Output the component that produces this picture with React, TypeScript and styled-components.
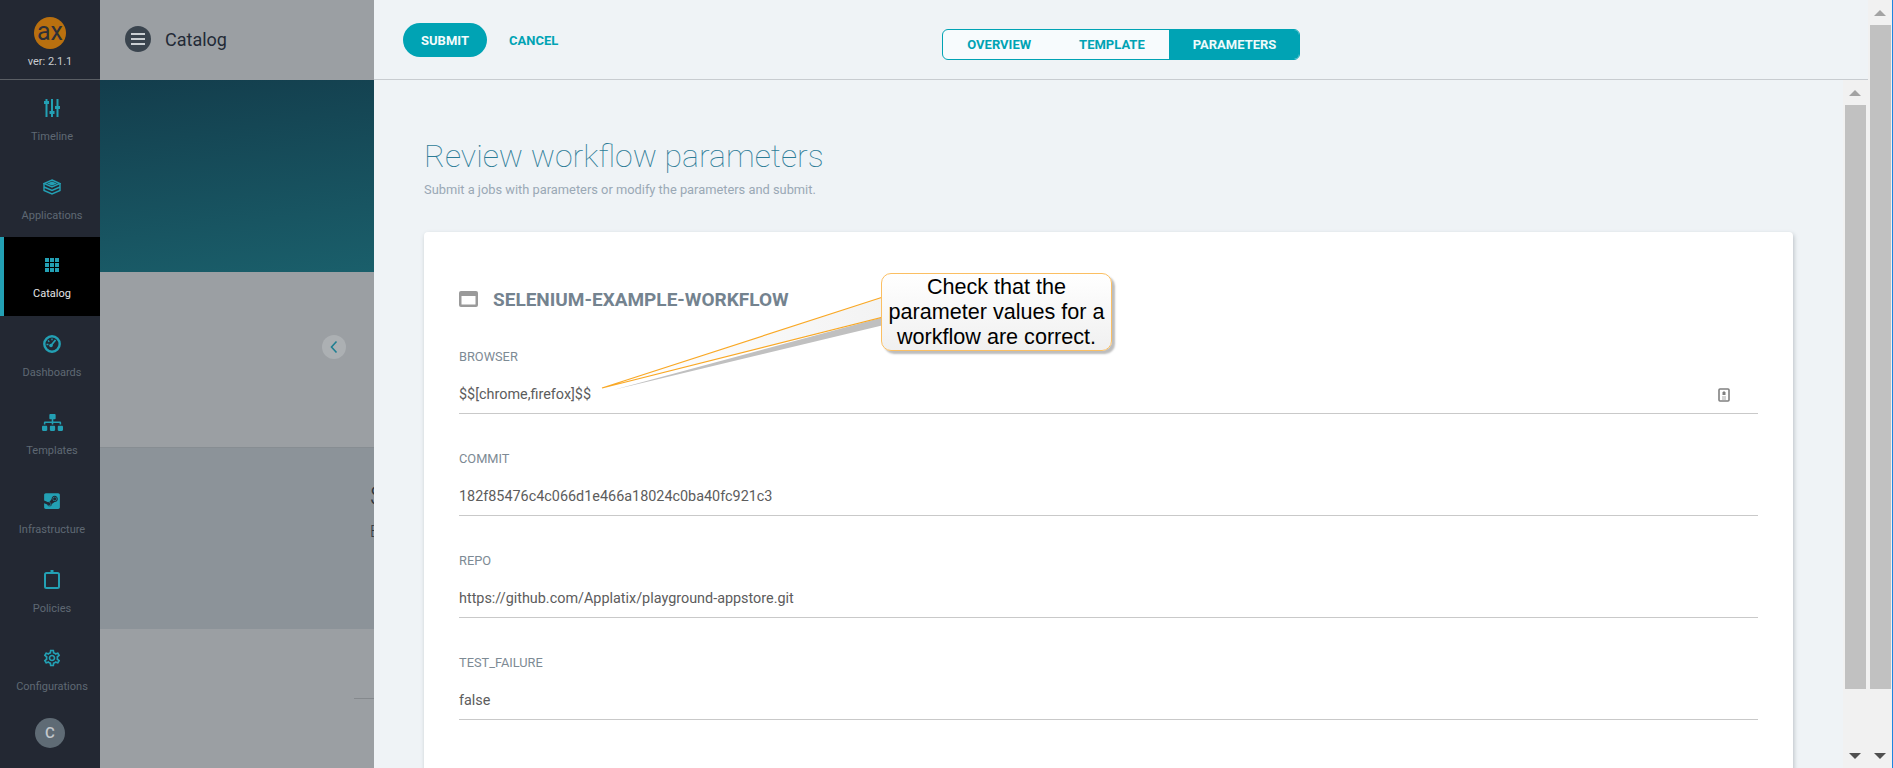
import React from "react";
import styled, { createGlobalStyle } from "styled-components";
import { FaSitemap, FaSteamSquare } from "react-icons/fa";
import { MdOutlineSettings } from "react-icons/md";

const GlobalStyle = createGlobalStyle`
    html, body {
        margin: 0;
        height: 100%;
        overflow: hidden;
    }
    #root {
        height: 100%;
    }
    * {
        box-sizing: border-box;
    }
`;

const Page = styled.div`
    position: relative;
    display: flex;
    width: 1893px;
    height: 768px;
    overflow: hidden;
    font-family: Roboto, "Liberation Sans", sans-serif;
    background: #9b9fa3;
`;

/* 왼쪽 사이드바 */
const Sidebar = styled.nav`
    display: flex;
    flex-direction: column;
    flex: 0 0 100px;
    background: #232833;
`;

const Brand = styled.div`
    display: flex;
    flex-direction: column;
    align-items: center;
    height: 80px;
    padding-top: 17px;
    border-bottom: 1px solid #5a5e64;

    span {
        margin-top: 6px;
        font-size: 11px;
        line-height: 13px;
        color: #c9ccd0;
    }
`;

const NavItem = styled.a<{ $active?: boolean }>`
    display: flex;
    flex-direction: column;
    align-items: center;
    height: 78.6px;
    padding-top: 17px;
    font-size: 11px;
    color: ${(p) => (p.$active ? "#e4e6e8" : "#5f6873")};
    background: ${(p) => (p.$active ? "#000" : "transparent")};
    border-left: 4px solid ${(p) => (p.$active ? "#23a0b4" : "transparent")};

    .icon {
        display: flex;
        align-items: center;
        justify-content: center;
        width: 24px;
        height: 22px;
        color: #23a0b4;
    }

    .label {
        margin-top: 11px;
        line-height: 14px;
    }
`;

const Avatar = styled.div`
    display: flex;
    align-items: center;
    justify-content: center;
    width: 30px;
    height: 30px;
    margin: 9px auto 0;
    border-radius: 50%;
    background: #5f6b75;
    color: #c3c8cc;
    font-size: 15px;
    font-weight: 500;
`;

/* 패널 뒤쪽의 어두워진 페이지 */
const Backdrop = styled.div`
    display: flex;
    flex-direction: column;
    flex: 0 0 274px;
    overflow: hidden;
`;

const BackdropHeader = styled.header`
    display: flex;
    align-items: center;
    gap: 14px;
    height: 80px;
    padding: 0 0 2px 25px;
    font-size: 18px;
    color: #232a36;
`;

const MenuButton = styled.div`
    display: flex;
    flex-direction: column;
    align-items: center;
    justify-content: center;
    gap: 3px;
    width: 26px;
    height: 26px;
    border-radius: 50%;
    background: #3a444e;

    i {
        width: 14px;
        height: 2px;
        background: #c9ced2;
    }
`;

const Hero = styled.div`
    height: 192px;
    background: linear-gradient(172deg, #133d4c 0%, #1a5f6b 100%);
`;

const Gap = styled.div`
    display: flex;
    justify-content: flex-end;
    height: 175px;
    padding: 63px 28px 0 0;
`;

const RoundBack = styled.div`
    display: flex;
    align-items: center;
    justify-content: center;
    width: 24px;
    height: 24px;
    border-radius: 50%;
    background: #acb0b3;
`;

const Band = styled.div`
    height: 182px;
    padding: 33px 0 0 270px;
    background: #8c9399;
    color: #2f3740;
    border-top: 1px solid #878d92;
    white-space: nowrap;

    h3 {
        margin: 0;
        font-size: 26px;
        font-weight: 300;
        line-height: 30px;
    }

    p {
        margin: 12px 0 0;
        font-size: 16px;
        font-weight: 300;
        line-height: 18px;
    }
`;

const BackdropLine = styled.div`
    align-self: flex-end;
    width: 20px;
    height: 1px;
    margin-top: 69px;
    background: #85898d;
`;

/* 슬라이드 패널 */
const Panel = styled.main`
    display: flex;
    flex-direction: column;
    flex: 0 0 1494px;
    background: #eff3f6;
`;

const TopBar = styled.div`
    display: flex;
    align-items: flex-start;
    flex: 0 0 80px;
    padding: 23px 0 0 29px;
    border-bottom: 1px solid #c8ccd0;
`;

const SubmitButton = styled.button`
    width: 84px;
    height: 34px;
    border: 0;
    border-radius: 17px;
    background: #00a3b4;
    color: #f4fbfc;
    font: 700 13px Roboto, sans-serif;
`;

const CancelButton = styled.button`
    height: 34px;
    margin-left: 22px;
    padding: 0;
    border: 0;
    background: none;
    color: #00a3b4;
    font: 700 13px Roboto, sans-serif;
`;

const Tabs = styled.div`
    display: flex;
    height: 31px;
    margin: 6px 0 0 384px;
    border: 1px solid #00a3b4;
    border-radius: 6px;
    background: #f7fbfd;
    overflow: hidden;
`;

const Tab = styled.div<{ $active?: boolean }>`
    display: flex;
    align-items: center;
    padding: 0 ${(p) => (p.$active ? "23px" : "24px")} 0 24px;
    font-size: 13px;
    font-weight: 700;
    color: ${(p) => (p.$active ? "#eefafb" : "#00a3b4")};
    background: ${(p) => (p.$active ? "#00a3b4" : "transparent")};
`;

const PanelBody = styled.div`
    display: flex;
    flex: 1;
    min-height: 0;
`;

const Content = styled.section`
    flex: 1;
    min-width: 0;
    padding: 57px 50px 0;
    overflow: hidden;
`;

const Title = styled.h1`
    margin: 0;
    font-size: 32px;
    font-weight: 100;
    line-height: 38px;
    color: #2d7c97;
`;

const Subtitle = styled.p`
    margin: 7px 0 0;
    font-size: 12.85px;
    line-height: 16px;
    color: #9aa8b5;
`;

const Card = styled.div`
    width: 1369px;
    height: 620px;
    margin-top: 34px;
    padding: 56px 35px 0;
    border-radius: 4px;
    background: #fff;
    box-shadow: 1px 2px 4px rgba(90, 100, 110, 0.35);
`;

const CardTitle = styled.h2`
    display: flex;
    align-items: center;
    gap: 15px;
    height: 22px;
    margin: 0;
    font-size: 19px;
    font-weight: 700;
    color: #74838f;
`;

const Field = styled.div`
    height: 102px;
    padding-top: 15px;
    &:first-of-type {
        padding-top: 0;
        height: 87px;
        margin-top: 40px;
    }
`;

const FieldLabel = styled.label`
    display: block;
    font-size: 12.8px;
    line-height: 14px;
    color: #7d8a94;
`;

const FieldValue = styled.div`
    display: flex;
    align-items: center;
    justify-content: space-between;
    height: 36px;
    margin-top: 14px;
    padding-right: 28px;
    padding-bottom: 2px;
    font-size: 14.4px;
    color: #5c5c5c;
    border-bottom: 1px solid #c9c9c9;
`;

/* 스크롤바 */
const ScrollTrack = styled.div`
    display: flex;
    flex-direction: column;
    align-items: center;
    flex: 0 0 25px;
    padding-right: 1px;
    background: #f1f1f1;
`;

const ScrollThumb = styled.div<{ $size: number }>`
    flex: 0 0 ${(p) => p.$size}px;
    width: 21px;
    background: #c1c1c1;
`;

const ArrowBox = styled.div`
    display: flex;
    align-items: center;
    justify-content: center;
    flex: 0 0 25px;
    width: 100%;
`;

const Arrow = styled.i<{ $down?: boolean }>`
    width: 0;
    height: 0;
    border-left: 6px solid transparent;
    border-right: 6px solid transparent;
    ${(p) =>
        p.$down
            ? "border-top: 6px solid #505050; margin-top: 1px;"
            : "border-bottom: 6px solid #a3a3a3;"}
`;

const TrackFill = styled.div`
    flex: 1;
`;

const OuterBar = styled(ScrollTrack)`
    padding-right: 0;
    border-right: 1px solid #1c86e0;
`;

/* 말풍선 주석 */
const CalloutTail = styled.svg`
    position: absolute;
    left: 598px;
    top: 290px;
`;

const CalloutBox = styled.div`
    position: absolute;
    left: 881px;
    top: 273px;
    width: 231px;
    height: 78px;
    border: 1px solid #fbbf63;
    border-radius: 10px;
    background: linear-gradient(#ffffff, #f0f0f0);
    box-shadow: 3px 3px 2px #bdbdbd;
    font: 21.6px/25px "Liberation Sans", Arial, sans-serif;
    color: #000;
    text-align: center;
    white-space: nowrap;
`;

const TimelineIcon = () => (
    <svg width="16" height="18" viewBox="0 0 16 18" fill="currentColor">
        <rect x="1.500" y="0" width="2" height="18" />
        <rect x="7" y="0" width="2" height="18" />
        <rect x="12.500" y="0" width="2" height="18" />
        <rect x="0" y="2" width="5" height="3" />
        <rect x="5.500" y="12" width="5" height="3" />
        <rect x="11" y="7" width="5" height="3" />
    </svg>
);

const LayersIcon = () => (
    <svg width="18" height="16" viewBox="0 0 18 16" fill="none" stroke="currentColor" strokeWidth="1.400">
        <path d="M9 1 17 4.500 9 8 1 4.500Z" />
        <path d="M4 4.500 9 2.500 14 4.500 9 6.500Z" fill="currentColor" stroke="none" />
        <path d="M1 4.500V11.500L9 15 17 11.500V4.500" />
        <path d="M1 8 9 11.500 17 8" />
    </svg>
);

const GridIcon = () => (
    <svg width="14" height="14" viewBox="0 0 14 14" fill="currentColor">
        {[0, 5, 10].map((y) =>
            [0, 5, 10].map((x) => <rect key={`${x}-${y}`} x={x} y={y} width="4" height="4" />),
        )}
    </svg>
);

const GaugeIcon = () => (
    <svg width="18" height="18" viewBox="0 0 18 18" fill="none" stroke="currentColor">
        <circle cx="9" cy="9" r="7.700" strokeWidth="2.400" />
        <path d="M8 10.500 12.500 5" strokeWidth="1.800" />
        <circle cx="8" cy="10.500" r="1.800" fill="currentColor" stroke="none" />
        <path d="M3.500 9.500H5.500M5 5.500 6.300 6.800M9 3.500V5.300" strokeWidth="1.300" />
    </svg>
);

const ClipboardIcon = () => (
    <svg width="16" height="19" viewBox="0 0 16 19" fill="none" stroke="currentColor" strokeWidth="2">
        <rect x="1" y="3" width="14" height="15" rx="1.500" />
        <path d="M8 0v3" strokeWidth="3" />
    </svg>
);

const WindowIcon = () => (
    <svg width="19" height="16" viewBox="0 0 19 16">
        <rect width="19" height="16" rx="2" fill="#9a9a9a" />
        <rect x="2.500" y="5" width="14" height="8.500" fill="#fff" />
    </svg>
);

const ValueListIcon = () => (
    <svg width="12" height="14" viewBox="0 0 12 14" fill="none">
        <rect x="1" y="1" width="10" height="12" stroke="#808080" strokeWidth="1.600" rx="1" />
        <path d="M4.500 7V4.500L6 3l1.500 1.500V7Z" fill="#808080" />
        <path d="M4 9h4M4 11h4" stroke="#a8a8a8" />
    </svg>
);

const navItems = [
    { label: "Timeline", icon: <TimelineIcon /> },
    { label: "Applications", icon: <LayersIcon /> },
    { label: "Catalog", icon: <GridIcon />, active: true },
    { label: "Dashboards", icon: <GaugeIcon /> },
    { label: "Templates", icon: <FaSitemap size={21} /> },
    { label: "Infrastructure", icon: <FaSteamSquare size={18} /> },
    { label: "Policies", icon: <ClipboardIcon /> },
    { label: "Configurations", icon: <MdOutlineSettings size={20} /> },
];

const fields = [
    { label: "BROWSER", value: "$$[chrome,firefox]$$", icon: true },
    { label: "COMMIT", value: "182f85476c4c066d1e466a18024c0ba40fc921c3" },
    { label: "REPO", value: "https://github.com/Applatix/playground-appstore.git" },
    { label: "TEST_FAILURE", value: "false" },
];

const App = () => {
    return (
        <Page>
            <GlobalStyle />
            <Sidebar>
                <Brand>
                    <svg width="32" height="32" viewBox="0 0 32 32">
                        <circle cx="16" cy="16" r="16" fill="#b9700f" />
                        <text x="16" y="23" textAnchor="middle" fontFamily="Roboto, sans-serif" fontSize="25" fill="#2c2f38">
                            ax
                        </text>
                    </svg>
                    <span>ver: 2.1.1</span>
                </Brand>
                {navItems.map((item) => (
                    <NavItem key={item.label} $active={item.active}>
                        <span className="icon">{item.icon}</span>
                        <span className="label">{item.label}</span>
                    </NavItem>
                ))}
                <Avatar>C</Avatar>
            </Sidebar>

            <Backdrop>
                <BackdropHeader>
                    <MenuButton>
                        <i />
                        <i />
                        <i />
                    </MenuButton>
                    Catalog
                </BackdropHeader>
                <Hero />
                <Gap>
                    <RoundBack>
                        <svg width="10" height="14" viewBox="0 0 10 14" fill="none" stroke="#1f7f92" strokeWidth="1.600">
                            <path d="M7.500 1.500 2.500 7l5 5.500" />
                        </svg>
                    </RoundBack>
                </Gap>
                <Band>
                    <h3>Selenium</h3>
                    <p>Example</p>
                </Band>
                <BackdropLine />
            </Backdrop>

            <Panel>
                <TopBar>
                    <SubmitButton>SUBMIT</SubmitButton>
                    <CancelButton>CANCEL</CancelButton>
                    <Tabs>
                        <Tab>OVERVIEW</Tab>
                        <Tab>TEMPLATE</Tab>
                        <Tab $active>PARAMETERS</Tab>
                    </Tabs>
                </TopBar>
                <PanelBody>
                    <Content>
                        <Title>Review workflow parameters</Title>
                        <Subtitle>Submit a jobs with parameters or modify the parameters and submit.</Subtitle>
                        <Card>
                            <CardTitle>
                                <WindowIcon />
                                SELENIUM-EXAMPLE-WORKFLOW
                            </CardTitle>
                            {fields.map((field) => (
                                <Field key={field.label}>
                                    <FieldLabel>{field.label}</FieldLabel>
                                    <FieldValue>
                                        {field.value}
                                        {field.icon && <ValueListIcon />}
                                    </FieldValue>
                                </Field>
                            ))}
                        </Card>
                    </Content>
                    <ScrollTrack>
                        <ArrowBox>
                            <Arrow />
                        </ArrowBox>
                        <ScrollThumb $size={584} />
                        <TrackFill />
                        <ArrowBox>
                            <Arrow $down />
                        </ArrowBox>
                    </ScrollTrack>
                </PanelBody>
            </Panel>

            <OuterBar>
                <ArrowBox>
                    <Arrow />
                </ArrowBox>
                <ScrollThumb $size={664} />
                <TrackFill />
                <ArrowBox>
                    <Arrow $down />
                </ArrowBox>
            </OuterBar>

            <CalloutTail width="290" height="105" viewBox="0 0 290 105">
                <defs>
                    <linearGradient id="tailFill" x1="0" y1="0" x2="1" y2="0">
                        <stop offset="0" stopColor="#ffffff" />
                        <stop offset="1" stopColor="#f3f3f3" />
                    </linearGradient>
                </defs>
                <polygon points="15,100 286,27 286,35" fill="#c0c0c0" />
                <polygon points="4,98 285,7 285,27" fill="url(#tailFill)" stroke="#f9a825" strokeWidth="1.200" />
            </CalloutTail>
            <CalloutBox>
                Check that the
                <br />
                parameter values for a
                <br />
                workflow are correct.
            </CalloutBox>
        </Page>
    );
};

export default App;
